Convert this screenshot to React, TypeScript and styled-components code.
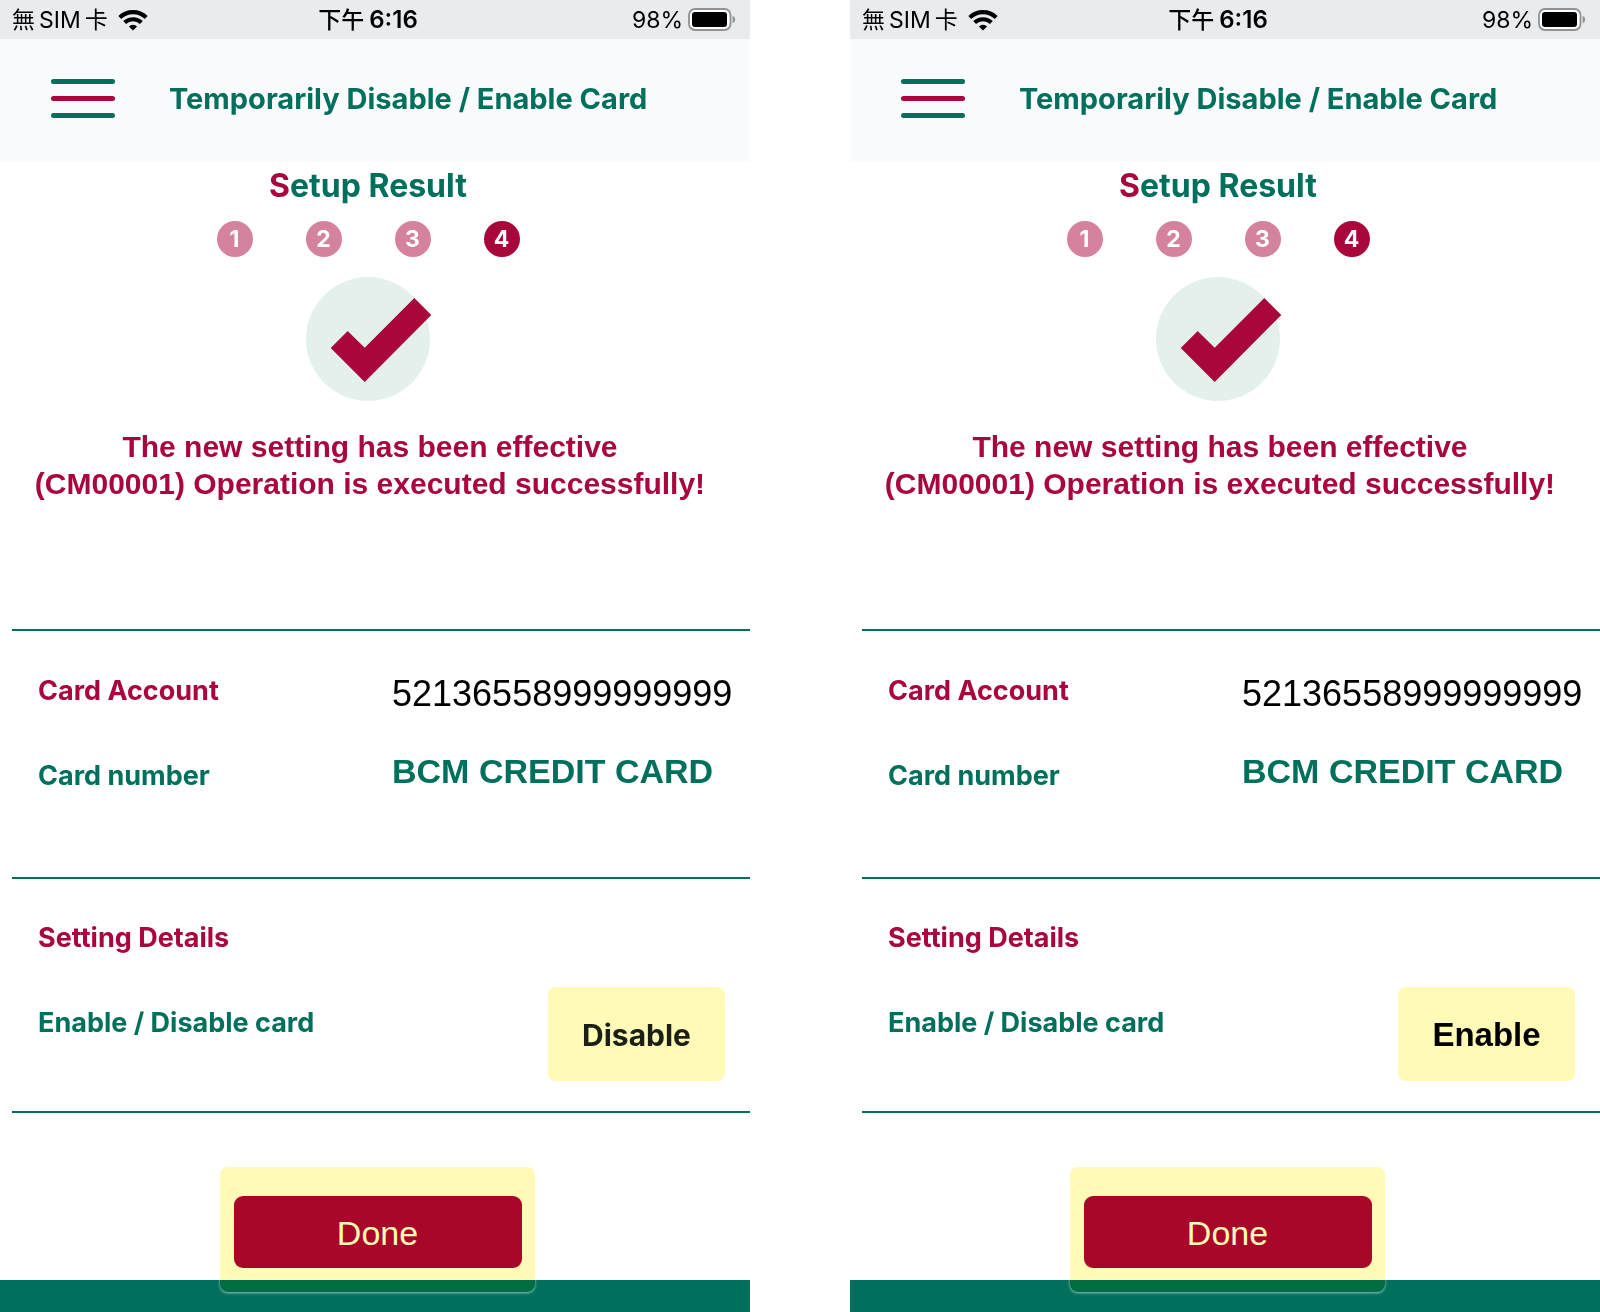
import React from "react";
import styled, { createGlobalStyle } from "styled-components";

const color = {
  green: "#00705c",
  crimson: "#a9063c",
  rose: "#d5829f",
  mint: "#e4f0ec",
  highlight: "#fffab6",
};

const ui = `Inter, "Noto Sans CJK TC", sans-serif`;
const arial = `"Liberation Sans", Arial, sans-serif`;

const GlobalStyle = createGlobalStyle`
  *, *::before, *::after { box-sizing: border-box; }
  body { margin: 0; background: #fff; font-family: ${ui}; }
  h1, h2, h3, p, ol, dl, dt, dd { margin: 0; padding: 0; font-weight: 700; }
`;

const Page = styled.div`
  display: grid;
  grid-template-columns: 1fr 1fr;
  column-gap: 100px;
  min-height: 100vh;
`;

const Phone = styled.article`
  display: flex;
  flex-direction: column;
  min-width: 0;
`;

const StatusBar = styled.div`
  display: grid;
  grid-template-columns: 1fr auto 1fr;
  align-items: center;
  height: 39px;
  padding-right: 14px;
  background: #e9ecef;
  color: #000;
  font-size: 23px;
  line-height: 32px;
  white-space: nowrap;
`;

const Carrier = styled.span`
  display: flex;
  align-items: center;
  gap: 10px;
  padding-left: 12px;
`;

const CarrierName = styled.span`
  display: flex;
  gap: 4px;
`;

const Clock = styled.span`
  display: flex;
  gap: 5px;
  font-size: 24px;
  font-weight: 600;
`;

const ClockPeriod = styled.span`
  font-size: 23px;
  font-weight: 500;
`;

const Power = styled.span`
  display: flex;
  align-items: center;
  justify-content: flex-end;
  gap: 5px;
`;

const Header = styled.header`
  display: flex;
  align-items: center;
  gap: 54px;
  height: 122px;
  padding: 0 24px 3px 51px;
  background: #f9fafc;
`;

const MenuButton = styled.button`
  display: flex;
  flex-direction: column;
  gap: 12px;
  width: 64px;
  padding: 0;
  border: 0;
  background: none;
  cursor: pointer;
`;

const MenuBar = styled.span<{ $accent?: boolean }>`
  height: 5px;
  border-radius: 3px;
  background: ${(p) => (p.$accent ? color.crimson : color.green)};
`;

const Title = styled.h1`
  color: ${color.green};
  font-size: 29px;
  line-height: 40px;
  white-space: nowrap;
`;

const Summary = styled.section`
  display: flex;
  flex-direction: column;
  align-items: center;
  padding: 5px 14px 127px 0;
`;

const StepTitle = styled.h2`
  color: ${color.green};
  font-size: 32px;
  line-height: 40px;

  &::first-letter {
    color: ${color.crimson};
  }
`;

const Steps = styled.ol`
  display: flex;
  gap: 53px;
  margin: 15px 0 20px;
  list-style: none;
`;

const Step = styled.li<{ $current: boolean }>`
  width: 36px;
  border-radius: 50%;
  background: ${(p) => (p.$current ? color.crimson : color.rose)};
  color: #fff;
  font-size: 23px;
  font-weight: 700;
  line-height: 36px;
  text-align: center;
`;

const Message = styled.p`
  margin-top: 27px;
  padding-left: 4px;
  color: ${color.crimson};
  font-family: ${arial};
  font-size: 30px;
  line-height: 37px;
  text-align: center;
`;

const Details = styled.dl`
  display: flex;
  flex-direction: column;
  gap: 39px;
  margin-left: 12px;
  padding: 40px 0 81px 26px;
  border-top: 2px solid ${color.green};
`;

const Settings = styled.section`
  display: flex;
  flex-direction: column;
  gap: 29px;
  margin-left: 12px;
  padding: 39px 25px 30px 26px;
  border: solid ${color.green};
  border-width: 2px 0;
`;

const Row = styled.div`
  display: grid;
  grid-template-columns: 354fr 358fr;
  align-items: start;
`;

const Label = styled.dt<{ $accent?: boolean }>`
  color: ${(p) => (p.$accent ? color.crimson : color.green)};
  font-size: 27px;
  line-height: 40px;
`;

const AccountNumber = styled.dd`
  color: #000;
  font-family: ${arial};
  font-size: 36px;
  font-weight: 400;
  line-height: 46px;
`;

const ProductName = styled.dd`
  color: ${color.green};
  font-family: ${arial};
  font-size: 34px;
  line-height: 30px;
  white-space: nowrap;
`;

const SettingRow = styled.dl`
  display: flex;
  justify-content: space-between;

  dt {
    padding-top: 16px;
  }
`;

const SettingValue = styled.dd<{ $arial?: boolean }>`
  display: flex;
  align-items: center;
  justify-content: center;
  width: 177px;
  height: 94px;
  padding-top: 2px;
  border-radius: 8px;
  background: ${color.highlight};
  color: ${(p) => (p.$arial ? "#000" : "#1b2016")};
  font-family: ${(p) => (p.$arial ? arial : ui)};
  font-size: ${(p) => (p.$arial ? 33 : 30)}px;
`;

/* The highlight overlaps the footer and tints it, so its fill is multiplied. */
const ActionHighlight = styled.div`
  position: relative;
  align-self: center;
  margin: 54px 0 -12px 4px;
  padding: 29px 13px 24px 14px;
  border-radius: 8px;
  box-shadow: 0 1px 3px rgba(255, 255, 255, 0.6);

  &::before {
    content: "";
    position: absolute;
    inset: 0;
    border-radius: 8px;
    background: ${color.highlight};
    mix-blend-mode: multiply;
  }
`;

const DoneButton = styled.button`
  position: relative;
  display: block;
  width: 288px;
  height: 72px;
  padding: 2px 0 0;
  border: 0;
  border-radius: 9px;
  background: #a90729;
  color: ${color.highlight};
  font-family: ${arial};
  font-size: 34px;
  cursor: pointer;
`;

const Footer = styled.footer`
  flex: 1 0 32px;
  background: ${color.green};
`;

const WifiIcon = () => (
  <svg width="30" height="22" viewBox="0 0 30 22" aria-hidden="true">
    <g fill="none" stroke="#000" strokeWidth="4.2">
      <path d="M1.8 8.4a19 19 0 0 1 26.4 0" />
      <path d="M6.6 13.6a12.2 12.2 0 0 1 16.8 0" />
    </g>
    <path d="M15 21.5l-4.1-4.1a6 6 0 0 1 8.2 0z" />
  </svg>
);

const BatteryIcon = () => (
  <svg width="48" height="23" viewBox="0 0 48 23" aria-hidden="true">
    <rect x="1" y="1" width="41.5" height="21" rx="6" fill="#fff" stroke="#8f9193" strokeWidth="1.8" />
    <rect x="4" y="4" width="35" height="15" rx="3" />
    <path d="M44.6 7.8q2.6 1 2.6 3.7t-2.6 3.7z" fill="#8f9193" />
  </svg>
);

const CheckMark = () => (
  <svg width="124" height="124" viewBox="0 0 124 124" overflow="visible" role="img" aria-label="Success">
    <circle cx="62" cy="62" r="62" fill={color.mint} />
    <path d="M108.3 21l17 17-66.6 67-34-34 17-17 17 16.8z" fill={color.crimson} />
  </svg>
);

type ScreenProps = { value: string; arialValue?: boolean };

const ResultScreen = ({ value, arialValue }: ScreenProps) => (
  <Phone>
    <StatusBar>
      <Carrier>
        <CarrierName>
          <span>無</span>
          <span>SIM</span>
          <span>卡</span>
        </CarrierName>
        <WifiIcon />
      </Carrier>
      <Clock>
        <ClockPeriod>下午</ClockPeriod>
        <span>6:16</span>
      </Clock>
      <Power>
        98%
        <BatteryIcon />
      </Power>
    </StatusBar>
    <Header>
      <MenuButton type="button" aria-label="Menu">
        <MenuBar />
        <MenuBar $accent />
        <MenuBar />
      </MenuButton>
      <Title>Temporarily Disable / Enable Card</Title>
    </Header>
    <Summary>
      <StepTitle>Setup Result</StepTitle>
      <Steps>
        {[1, 2, 3, 4].map((n) => (
          <Step key={n} $current={n === 4}>
            {n}
          </Step>
        ))}
      </Steps>
      <CheckMark />
      <Message>
        The new setting has been effective
        <br />
        (CM00001) Operation is executed successfully!
      </Message>
    </Summary>
    <Details>
      <Row>
        <Label $accent>Card Account</Label>
        <AccountNumber>52136558999999999</AccountNumber>
      </Row>
      <Row>
        <Label>Card number</Label>
        <ProductName>BCM CREDIT CARD</ProductName>
      </Row>
    </Details>
    <Settings>
      <Label as="h3" $accent>
        Setting Details
      </Label>
      <SettingRow>
        <Label>Enable / Disable card</Label>
        <SettingValue $arial={arialValue}>{value}</SettingValue>
      </SettingRow>
    </Settings>
    <ActionHighlight>
      <DoneButton type="button">Done</DoneButton>
    </ActionHighlight>
    <Footer />
  </Phone>
);

export default function App() {
  return (
    <>
      <GlobalStyle />
      <Page>
        <ResultScreen value="Disable" />
        <ResultScreen value="Enable" arialValue />
      </Page>
    </>
  );
}
